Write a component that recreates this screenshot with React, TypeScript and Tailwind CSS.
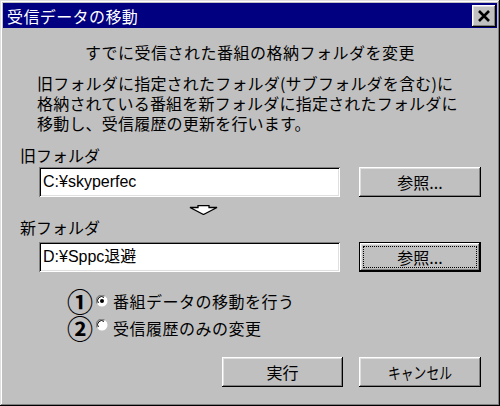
import React from "react";

// Win95-style bevels
const raised =
  "shadow-[inset_-1px_-1px_#000,inset_1px_1px_#fff,inset_-2px_-2px_#808080,inset_2px_2px_#dfdfdf]";
const sunken =
  "shadow-[inset_1px_1px_#808080,inset_-1px_-1px_#fff,inset_2px_2px_#000,inset_-2px_-2px_#dfdfdf]";

function Button({ children, primary = false, width = "w-[122px]" }: { children: React.ReactNode; primary?: boolean; width?: string }) {
  if (primary) {
    return (
      <div className={`${width} h-[30px] border border-black bg-[#c0c0c0]`}>
        <div className={`h-full w-full ${raised} p-[3px]`}>
          <div className="h-full w-full border border-dotted border-black flex items-center justify-center text-[16px] leading-none">
            {children}
          </div>
        </div>
      </div>
    );
  }
  return (
    <div className={`${width} h-[30px] bg-[#c0c0c0] ${raised} flex items-center justify-center text-[16px] leading-none`}>
      {children}
    </div>
  );
}

function Field({ value }: { value: string }) {
  return (
    <div className={`w-[301px] h-[30px] bg-white ${sunken} flex items-center pl-[4px] text-[16px] leading-none font-['Liberation_Sans','Noto_Sans_CJK_JP',sans-serif]`}>
      {value}
    </div>
  );
}

function Radio({ checked }: { checked: boolean }) {
  return (
    <svg width="12" height="12" viewBox="0 0 12 12" className="shrink-0">
      <circle cx="6" cy="6" r="5.5" fill="#fff" />
      <path d="M1.2 8.5 A5.3 5.3 0 0 1 8.5 1.2" stroke="#808080" strokeWidth="1.2" fill="none" />
      <path d="M2.4 8 A4 4 0 0 1 8 2.4" stroke="#000" strokeWidth="1" fill="none" />
      {checked && <circle cx="6" cy="6" r="2" fill="#000" />}
    </svg>
  );
}

export default function App() {
  return (
    <div className="w-[500px] h-[406px] bg-[#c0c0c0] p-[3px] flex flex-col text-black font-['Noto_Sans_CJK_JP',sans-serif] shadow-[inset_-1px_-1px_#000,inset_1px_1px_#dfdfdf,inset_-2px_-2px_#808080,inset_2px_2px_#fff]">
      {/* title bar */}
      <div className="h-[25px] bg-[#000080] flex items-center justify-between pl-[4px] pr-[1px]">
        <span className="text-white text-[16px] tracking-[0.4px] leading-none">受信データの移動</span>
        <div className={`w-[24px] h-[22px] bg-[#c0c0c0] ${raised} flex items-center justify-center`}>
          <svg width="14" height="12" viewBox="0 0 14 12">
            <path d="M2 1 L12 11 M12 1 L2 11" stroke="#000" strokeWidth="2.6" />
          </svg>
        </div>
      </div>

      <div className="flex flex-col pt-[14px]">
        <div className="h-[20px] flex items-center justify-center text-[16px] leading-none tracking-[0.5px]">
          すでに受信された番組の格納フォルダを変更
        </div>
        <div className="mt-[11px] pl-[34px] flex flex-col text-[16px] leading-none tracking-[0.2px]">
          <div className="h-[20px] flex items-center">旧フォルダに指定されたフォルダ(サブフォルダを含む)に</div>
          <div className="h-[20px] flex items-center">格納されている番組を新フォルダに指定されたフォルダに</div>
          <div className="h-[20px] flex items-center">移動し、受信履歴の更新を行います。</div>
        </div>

        <div className="mt-[12px] pl-[17px] h-[20px] flex items-center text-[16px] leading-none">旧フォルダ</div>
        <div className="mt-[2px] pl-[36px] flex gap-[19px]">
          <Field value="C:¥skyperfec" />
          <Button>参照...</Button>
        </div>

        <div className="mt-[8px] pl-[186px] h-[9px] flex">
          <svg width="30" height="10" viewBox="0 0 30 10">
            <polygon points="9,0.5 20,0.5 20,2.5 28,2.5 14.5,9.5 1,2.5 9,2.5" fill="#fff" stroke="#000" strokeWidth="1.3" />
          </svg>
        </div>

        <div className="mt-[3px] pl-[17px] h-[20px] flex items-center text-[16px] leading-none">新フォルダ</div>
        <div className="mt-[5px] pl-[36px] flex gap-[19px]">
          <Field value="D:¥Sppc退避" />
          <Button primary>参照...</Button>
        </div>

        <div className="mt-[15px] pl-[64px] flex flex-col text-[16px] tracking-[0.5px]">
          <div className="h-[27px] flex items-center">
            <span className="w-[25px] text-[26px] leading-none font-bold">①</span>
            <span className="ml-[4px] flex"><Radio checked /></span>
            <span className="ml-[5px] leading-none">番組データの移動を行う</span>
          </div>
          <div className="h-[27px] flex items-center">
            <span className="w-[25px] text-[26px] leading-none font-bold">②</span>
            <span className="ml-[4px] flex -translate-y-[3px]"><Radio checked={false} /></span>
            <span className="ml-[5px] leading-none">受信履歴のみの変更</span>
          </div>
        </div>

        <div className="mt-[16px] pr-[16px] flex justify-end gap-[16px]">
          <Button width="w-[121px]">実行</Button>
          <Button>
            <span className="inline-block scale-x-80">キャンセル</span>
          </Button>
        </div>
      </div>
    </div>
  );
}
